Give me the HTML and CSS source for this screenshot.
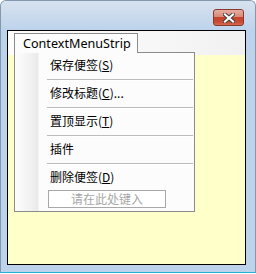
FILE: index.html
```html
<!DOCTYPE html>
<html>
<head>
<meta charset="utf-8">
<link rel="stylesheet" href="styles.css">
</head>
<body>
<div class="window">
  <div class="titlebar">
    <div class="close">
      <svg width="12" height="10" viewBox="0 0 12 10">
        <path d="M2 1.5 L10 8.5 M10 1.5 L2 8.5" stroke="#3b3b3b" stroke-width="4" stroke-linecap="square"/>
        <path d="M2 1.5 L10 8.5 M10 1.5 L2 8.5" stroke="#ffffff" stroke-width="2.2" stroke-linecap="square"/>
      </svg>
    </div>
  </div>
  <div class="client">
    <div class="menubar">
      <div class="tab">ContextMenuStrip</div>
    </div>
    <div class="canvas"></div>
    <div class="dropdown">
      <div class="item">保存便签(<u>S</u>)</div>
      <div class="sep"></div>
      <div class="item">修改标题(<u>C</u>)...</div>
      <div class="sep"></div>
      <div class="item">置顶显示(<u>T</u>)</div>
      <div class="sep"></div>
      <div class="item">插件</div>
      <div class="sep"></div>
      <div class="item">删除便签(<u>D</u>)</div>
      <div class="typehere">请在此处键入</div>
    </div>
  </div>
</div>
</body>
</html>
```
FILE: styles.css
```css
html, body {
  margin: 0;
  padding: 0;
  background: #ffffff;
}
body {
  width: 256px;
  height: 274px;
  overflow: hidden;
}
.window {
  box-sizing: border-box;
  width: 256px;
  height: 273px;
  border: 1px solid #8397ad;
  border-bottom: 1px solid #1fb2d6;
  border-radius: 6px 6px 0 0;
  background: #bdd3ec;
  display: flex;
  flex-direction: column;
}
.titlebar {
  height: 29px;
  box-sizing: border-box;
  padding-top: 8px;
  padding-right: 11px;
  display: flex;
  justify-content: flex-end;
  align-items: flex-start;
  border-radius: 5px 5px 0 0;
  background: linear-gradient(to bottom, #d7e2ef 0%, #c8d9ec 60%, #bdd3ec 100%);
}
.close {
  box-sizing: border-box;
  width: 31px;
  height: 17px;
  border: 1px solid #8a3a2c;
  border-radius: 3px;
  background: linear-gradient(to bottom, #e6ada0 0%, #d98a78 45%, #c6432d 50%, #c94a34 80%, #d86a52 100%);
  display: flex;
  align-items: center;
  justify-content: center;
}
.close svg {
  display: block;
}
.client {
  position: relative;
  box-sizing: border-box;
  height: 235px;
  margin: 0 9px 0 6px;
  border: 1px solid #000000;
  display: flex;
  flex-direction: column;
}
.menubar {
  height: 24px;
  box-sizing: border-box;
  padding: 2px 0 0 6px;
  background: linear-gradient(to right, #fdfdfd 0%, #f7f7f7 60%, #f1f1f1 100%);
  display: flex;
  align-items: flex-start;
}
.tab {
  position: relative;
  z-index: 2;
  box-sizing: border-box;
  width: 124px;
  height: 20px;
  border: 1px solid #8c8c8c;
  border-bottom: none;
  background: #fcfcfc;
  padding-left: 8px;
  font-family: "Noto Sans", "Open Sans", sans-serif;
  font-size: 12.6px;
  line-height: 19px;
  color: #000000;
}
.canvas {
  flex: 1;
  background: #ffffc9;
}
.dropdown {
  position: absolute;
  z-index: 1;
  left: 6px;
  top: 21px;
  box-sizing: border-box;
  width: 181px;
  height: 160px;
  border: 1px solid #8c8c8c;
  padding: 1px 0 3px 0;
  background: linear-gradient(to right, #fdfdfd 0px, #f1f1f1 16px, #e9e9e9 23px, #fcfcfc 24px);
  font-family: "Noto Sans CJK SC", "Noto Sans", sans-serif;
  font-size: 12px;
  color: #000000;
}
.item {
  height: 22px;
  line-height: 22px;
  padding-left: 35px;
  white-space: nowrap;
}
.item u {
  text-decoration: underline;
  text-underline-offset: 1px;
}
.sep {
  height: 6px;
  margin: 0 1px 0 32px;
  background: linear-gradient(to bottom, transparent 0, transparent 3px, #bdbdbd 3px, #bdbdbd 4px, #ffffff 4px, #ffffff 5px, transparent 5px);
}
.typehere {
  box-sizing: border-box;
  width: 118px;
  height: 18px;
  margin: 2px 0 0 33px;
  border: 1px solid #a8a8a8;
  background: #ffffff;
  color: #a6a6a6;
  text-align: center;
  line-height: 16px;
  font-size: 12px;
}
```
